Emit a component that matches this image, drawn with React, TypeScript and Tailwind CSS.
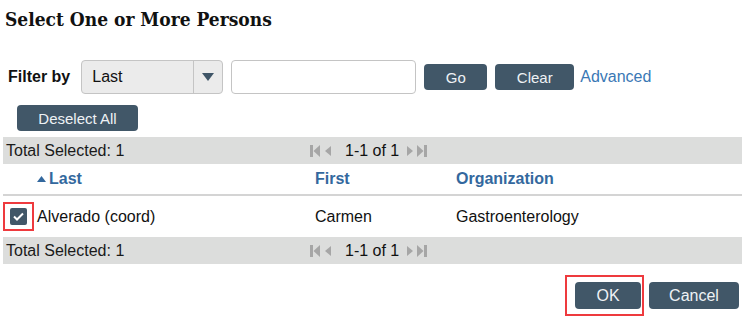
import React from "react";

const btn =
  "rounded-[4px] bg-[#415768] text-[#eef2f5] text-[15px] leading-none flex items-center justify-center";

function PagerIcon({ kind }: { kind: "first" | "prev" | "next" | "last" }) {
  const c = "#a6a6a6";
  if (kind === "first")
    return (
      <svg width="10" height="14" viewBox="0 0 10 14">
        <rect x="0" y="1" width="3" height="12" fill={c} />
        <path d="M10 1 L3.5 7 L10 13 Z" fill={c} />
      </svg>
    );
  if (kind === "last")
    return (
      <svg width="10" height="14" viewBox="0 0 10 14">
        <rect x="7" y="1" width="3" height="12" fill={c} />
        <path d="M0 1 L6.5 7 L0 13 Z" fill={c} />
      </svg>
    );
  if (kind === "prev")
    return (
      <svg width="6" height="14" viewBox="0 0 6 14">
        <path d="M6 2 L0 7 L6 12 Z" fill={c} />
      </svg>
    );
  return (
    <svg width="6" height="14" viewBox="0 0 6 14">
      <path d="M0 2 L6 7 L0 12 Z" fill={c} />
    </svg>
  );
}

function Pager() {
  return (
    <div className="flex items-center text-[16px] text-[#111]">
      <PagerIcon kind="first" />
      <span className="ml-[5px]" />
      <PagerIcon kind="prev" />
      <span className="ml-[14px]">1-1 of 1</span>
      <span className="ml-[8px]" />
      <PagerIcon kind="next" />
      <span className="ml-[4px]" />
      <PagerIcon kind="last" />
    </div>
  );
}

function TotalBar() {
  return (
    <div className="relative flex h-[27px] items-center bg-[#dcdddc] pl-[3px] text-[16px] text-[#1a1a1a]">
      <span>Total Selected: 1</span>
      <div className="absolute left-[307px] top-0 flex h-full items-center">
        <Pager />
      </div>
    </div>
  );
}

export default function App() {
  return (
    <div
      className="h-[322px] w-[745px] overflow-hidden bg-white text-[#111]"
      style={{ fontFamily: '"Liberation Sans", Arial, sans-serif' }}
    >
      <h1
        className="pl-[5px] pt-[7px] text-[19px] font-bold leading-[24px] text-[#111] [font-stretch:condensed]"
        style={{ fontFamily: '"DejaVu Serif Condensed", "DejaVu Serif", serif' }}
      >
        Select One or More Persons
      </h1>

      <div className="mt-[29px] flex items-center pl-[8px]">
        <span className="text-[16px] font-bold">Filter by</span>
        <div className="ml-[11px] flex h-[34px] w-[142px] items-stretch rounded-[4px] border border-[#c4c4c4] bg-[#ebebeb]">
          <span className="flex flex-1 items-center pl-[10px] text-[16px]">Last</span>
          <span className="flex w-[29px] items-center justify-center border-l border-[#c4c4c4]">
            <svg width="12" height="8" viewBox="0 0 12 8">
              <path d="M0 0 H12 L6 8 Z" fill="#3f5567" />
            </svg>
          </span>
        </div>
        <div className="ml-[8px] h-[34px] w-[185px] rounded-[4px] border border-[#c4c4c4] bg-white" />
        <button className={`${btn} ml-[8px] h-[26px] w-[63px]`}>Go</button>
        <button className={`${btn} ml-[8px] h-[26px] w-[79px]`}>Clear</button>
        <span className="ml-[6px] text-[16px] text-[#3a78b5]">Advanced</span>
      </div>

      <div className="mt-[11px] pl-[17px]">
        <button className={`${btn} h-[26px] w-[121px]`}>Deselect All</button>
      </div>

      <div className="mx-[3px] mt-[6px]">
        <TotalBar />
        <div className="flex h-[32px] items-center border-b-2 border-[#d4d4d4] text-[16px] font-bold text-[#33689e]">
          <div className="flex w-[312px] items-center pl-[34px]">
            <svg width="9" height="6" viewBox="0 0 9 6" className="mr-[3px]">
              <path d="M0 6 L4.5 0 L9 6 Z" fill="#33689e" />
            </svg>
            Last
          </div>
          <div className="w-[141px]">First</div>
          <div>Organization</div>
        </div>
        <div className="flex h-[41px] items-center text-[16px]">
          <div className="flex w-[312px] items-center">
            <div className="flex h-[29px] w-[31px] items-center justify-center border-2 border-[#ee3a3e]">
              <div className="flex h-[17px] w-[17px] items-center justify-center rounded-[2px] bg-[#415768]">
                <svg width="11" height="9" viewBox="0 0 11 9">
                  <path d="M1 4.5 L4 7.5 L10 1.5" stroke="#fff" strokeWidth="2" fill="none" />
                </svg>
              </div>
            </div>
            <span className="ml-[3px]">Alverado (coord)</span>
          </div>
          <div className="w-[141px]">Carmen</div>
          <div>Gastroenterology</div>
        </div>
        <TotalBar />
      </div>

      <div className="mt-[11px] flex justify-end pr-[6px]">
        <div className="flex h-[41px] w-[79px] items-center justify-center border-2 border-[#ee3a3e]">
          <button className={`${btn} ml-[7px] h-[27px] w-[66px] text-[16px]`}>OK</button>
        </div>
        <button className={`${btn} ml-[5px] mt-[7px] h-[27px] w-[90px] text-[16px]`}>Cancel</button>
      </div>
    </div>
  );
}
